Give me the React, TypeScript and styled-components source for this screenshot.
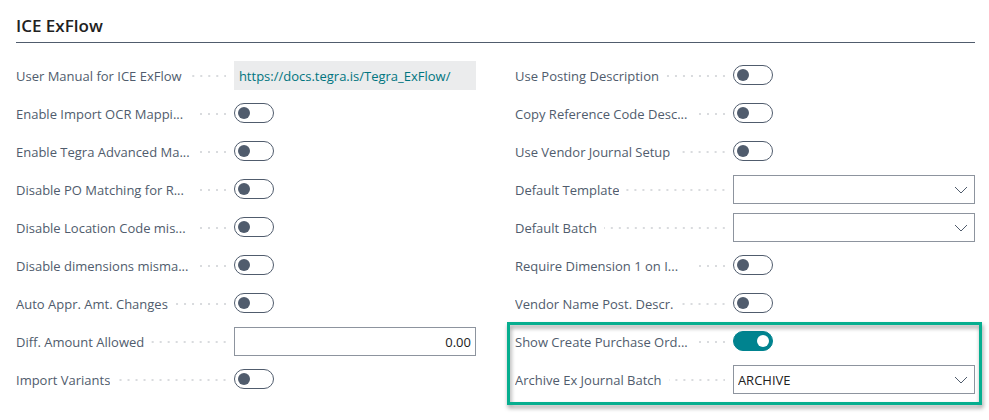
import React, { useId, useState } from "react";
import styled, { createGlobalStyle, css } from "styled-components";

const GlobalStyle = createGlobalStyle`
  *, *::before, *::after { box-sizing: border-box; }
  body {
    margin: 0;
    background: #fff;
    color: #505c6d;
    font-family: "Segoe UI", "Open Sans", "Noto Sans", sans-serif;
    font-size: 13px;
    line-height: 20px;
  }
`;

const Page = styled.main`
  padding: 12px 14px 24px 16px;
`;

const Heading = styled.h2`
  margin: 0 0 18px;
  padding: 2px 0 4px;
  border-bottom: 1px solid #505c6d;
  color: #212121;
  font-size: 17px;
  font-weight: 600;
  line-height: 24px;
`;

const Columns = styled.div`
  display: grid;
  grid-template-columns: repeat(2, minmax(0, 1fr));
  column-gap: 39px;
  align-items: start;
`;

const Stack = styled.div`
  display: grid;
  row-gap: 9px;
`;

const HighlightedStack = styled(Stack)`
  position: relative;
`;

const Highlight = styled.div`
  position: absolute;
  inset: -5px -7px -11px -8px;
  border: 3px solid #06ae8f;
  filter: drop-shadow(1px 3px 2px rgba(0, 0, 0, 0.4));
  pointer-events: none;
`;

const Row = styled.div`
  display: grid;
  grid-template-columns: minmax(0, 9fr) minmax(0, 10fr);
  align-items: center;
  min-height: 29px;
`;

const Caption = styled.div<{ $cut: boolean }>`
  display: flex;
  align-items: center;
  min-width: 0;
  padding-right: 8px;

  &::after {
    content: "";
    flex: ${(p) => (p.$cut ? "0 0 26px" : "1 0 26px")};
    height: 2px;
    margin-left: 7px;
    background: linear-gradient(to right, #d9dbde 2px, transparent 2px) right -6px top 0 / 8px 2px
      repeat-x;
  }
`;

const Label = styled.label<{ $cut: boolean }>`
  flex: ${(p) => (p.$cut ? "1 1 auto" : "0 1 auto")};
  overflow: hidden;
  white-space: nowrap;
`;

const Toggle = styled.input`
  appearance: none;
  display: block;
  width: 40px;
  height: 20px;
  margin: 0 0 1px;
  padding: 3px;
  border: 1px solid #505c6d;
  border-radius: 10px;
  background: #fff;
  cursor: pointer;

  &::before {
    content: "";
    display: block;
    width: 12px;
    height: 12px;
    border-radius: 50%;
    background: #505c6d;
  }

  &:checked {
    border-color: #00838f;
    background: #00838f;
  }

  &:checked::before {
    margin-left: auto;
    background: #fff;
  }
`;

const box = css`
  width: 100%;
  height: 29px;
  margin: 0;
  padding: 0 4px;
  border: 1px solid #8d949e;
  border-radius: 0;
  background: #fff;
  color: #212121;
  font: inherit;
`;

const AmountBox = styled.input`
  ${box}
  text-align: right;
`;

const SelectWrap = styled.div`
  display: grid;
  align-items: center;

  > * {
    grid-area: 1 / 1;
  }
`;

const SelectBox = styled.select`
  ${box}
  appearance: none;
  padding-right: 24px;
`;

const Chevron = styled.svg`
  justify-self: end;
  width: 14px;
  height: 8px;
  margin-right: 7px;
  pointer-events: none;
`;

const LinkBox = styled.div`
  height: 29px;
  padding: 5px;
  background: #ebeced;
  line-height: 20px;
`;

const Link = styled.a`
  color: #00757f;
  text-decoration: none;
`;

type FieldProps = {
  label: string;
  children: (id: string) => React.ReactNode;
};

function Field({ label, children }: FieldProps) {
  const id = useId();
  const cut = label.endsWith("...");
  return (
    <Row>
      <Caption $cut={cut}>
        <Label htmlFor={id} $cut={cut}>
          {label}
        </Label>
      </Caption>
      {children(id)}
    </Row>
  );
}

function ToggleField({ label, on = false }: { label: string; on?: boolean }) {
  const [checked, setChecked] = useState(on);
  return (
    <Field label={label}>
      {(id) => (
        <Toggle
          id={id}
          type="checkbox"
          role="switch"
          checked={checked}
          onChange={(e) => setChecked(e.target.checked)}
        />
      )}
    </Field>
  );
}

function SelectField({ label, value = "" }: { label: string; value?: string }) {
  return (
    <Field label={label}>
      {(id) => (
        <SelectWrap>
          <SelectBox id={id} defaultValue={value}>
            <option value={value}>{value}</option>
          </SelectBox>
          <Chevron viewBox="0 0 14 8" fill="none" stroke="#505c6d" aria-hidden="true">
            <path d="M1 1l6 6 6-6" />
          </Chevron>
        </SelectWrap>
      )}
    </Field>
  );
}

export default function App() {
  return (
    <>
      <GlobalStyle />
      <Page>
        <Heading>ICE ExFlow</Heading>
        <Columns>
          <Stack>
            <Field label="User Manual for ICE ExFlow">
              {(id) => (
                <LinkBox>
                  <Link id={id} href="https://docs.tegra.is/Tegra_ExFlow/">
                    https://docs.tegra.is/Tegra_ExFlow/
                  </Link>
                </LinkBox>
              )}
            </Field>
            <ToggleField label="Enable Import OCR Mappi..." />
            <ToggleField label="Enable Tegra Advanced Ma..." />
            <ToggleField label="Disable PO Matching for R..." />
            <ToggleField label="Disable Location Code mis..." />
            <ToggleField label="Disable dimensions misma..." />
            <ToggleField label="Auto Appr. Amt. Changes" />
            <Field label="Diff. Amount Allowed">
              {(id) => <AmountBox id={id} type="text" inputMode="decimal" defaultValue="0.00" />}
            </Field>
            <ToggleField label="Import Variants" />
          </Stack>
          <Stack>
            <ToggleField label="Use Posting Description" />
            <ToggleField label="Copy Reference Code Desc..." />
            <ToggleField label="Use Vendor Journal Setup" />
            <SelectField label="Default Template" />
            <SelectField label="Default Batch" />
            <ToggleField label="Require Dimension 1 on I..." />
            <ToggleField label="Vendor Name Post. Descr." />
            <HighlightedStack>
              <ToggleField label="Show Create Purchase Ord..." on />
              <SelectField label="Archive Ex Journal Batch" value="ARCHIVE" />
              <Highlight />
            </HighlightedStack>
          </Stack>
        </Columns>
      </Page>
    </>
  );
}
